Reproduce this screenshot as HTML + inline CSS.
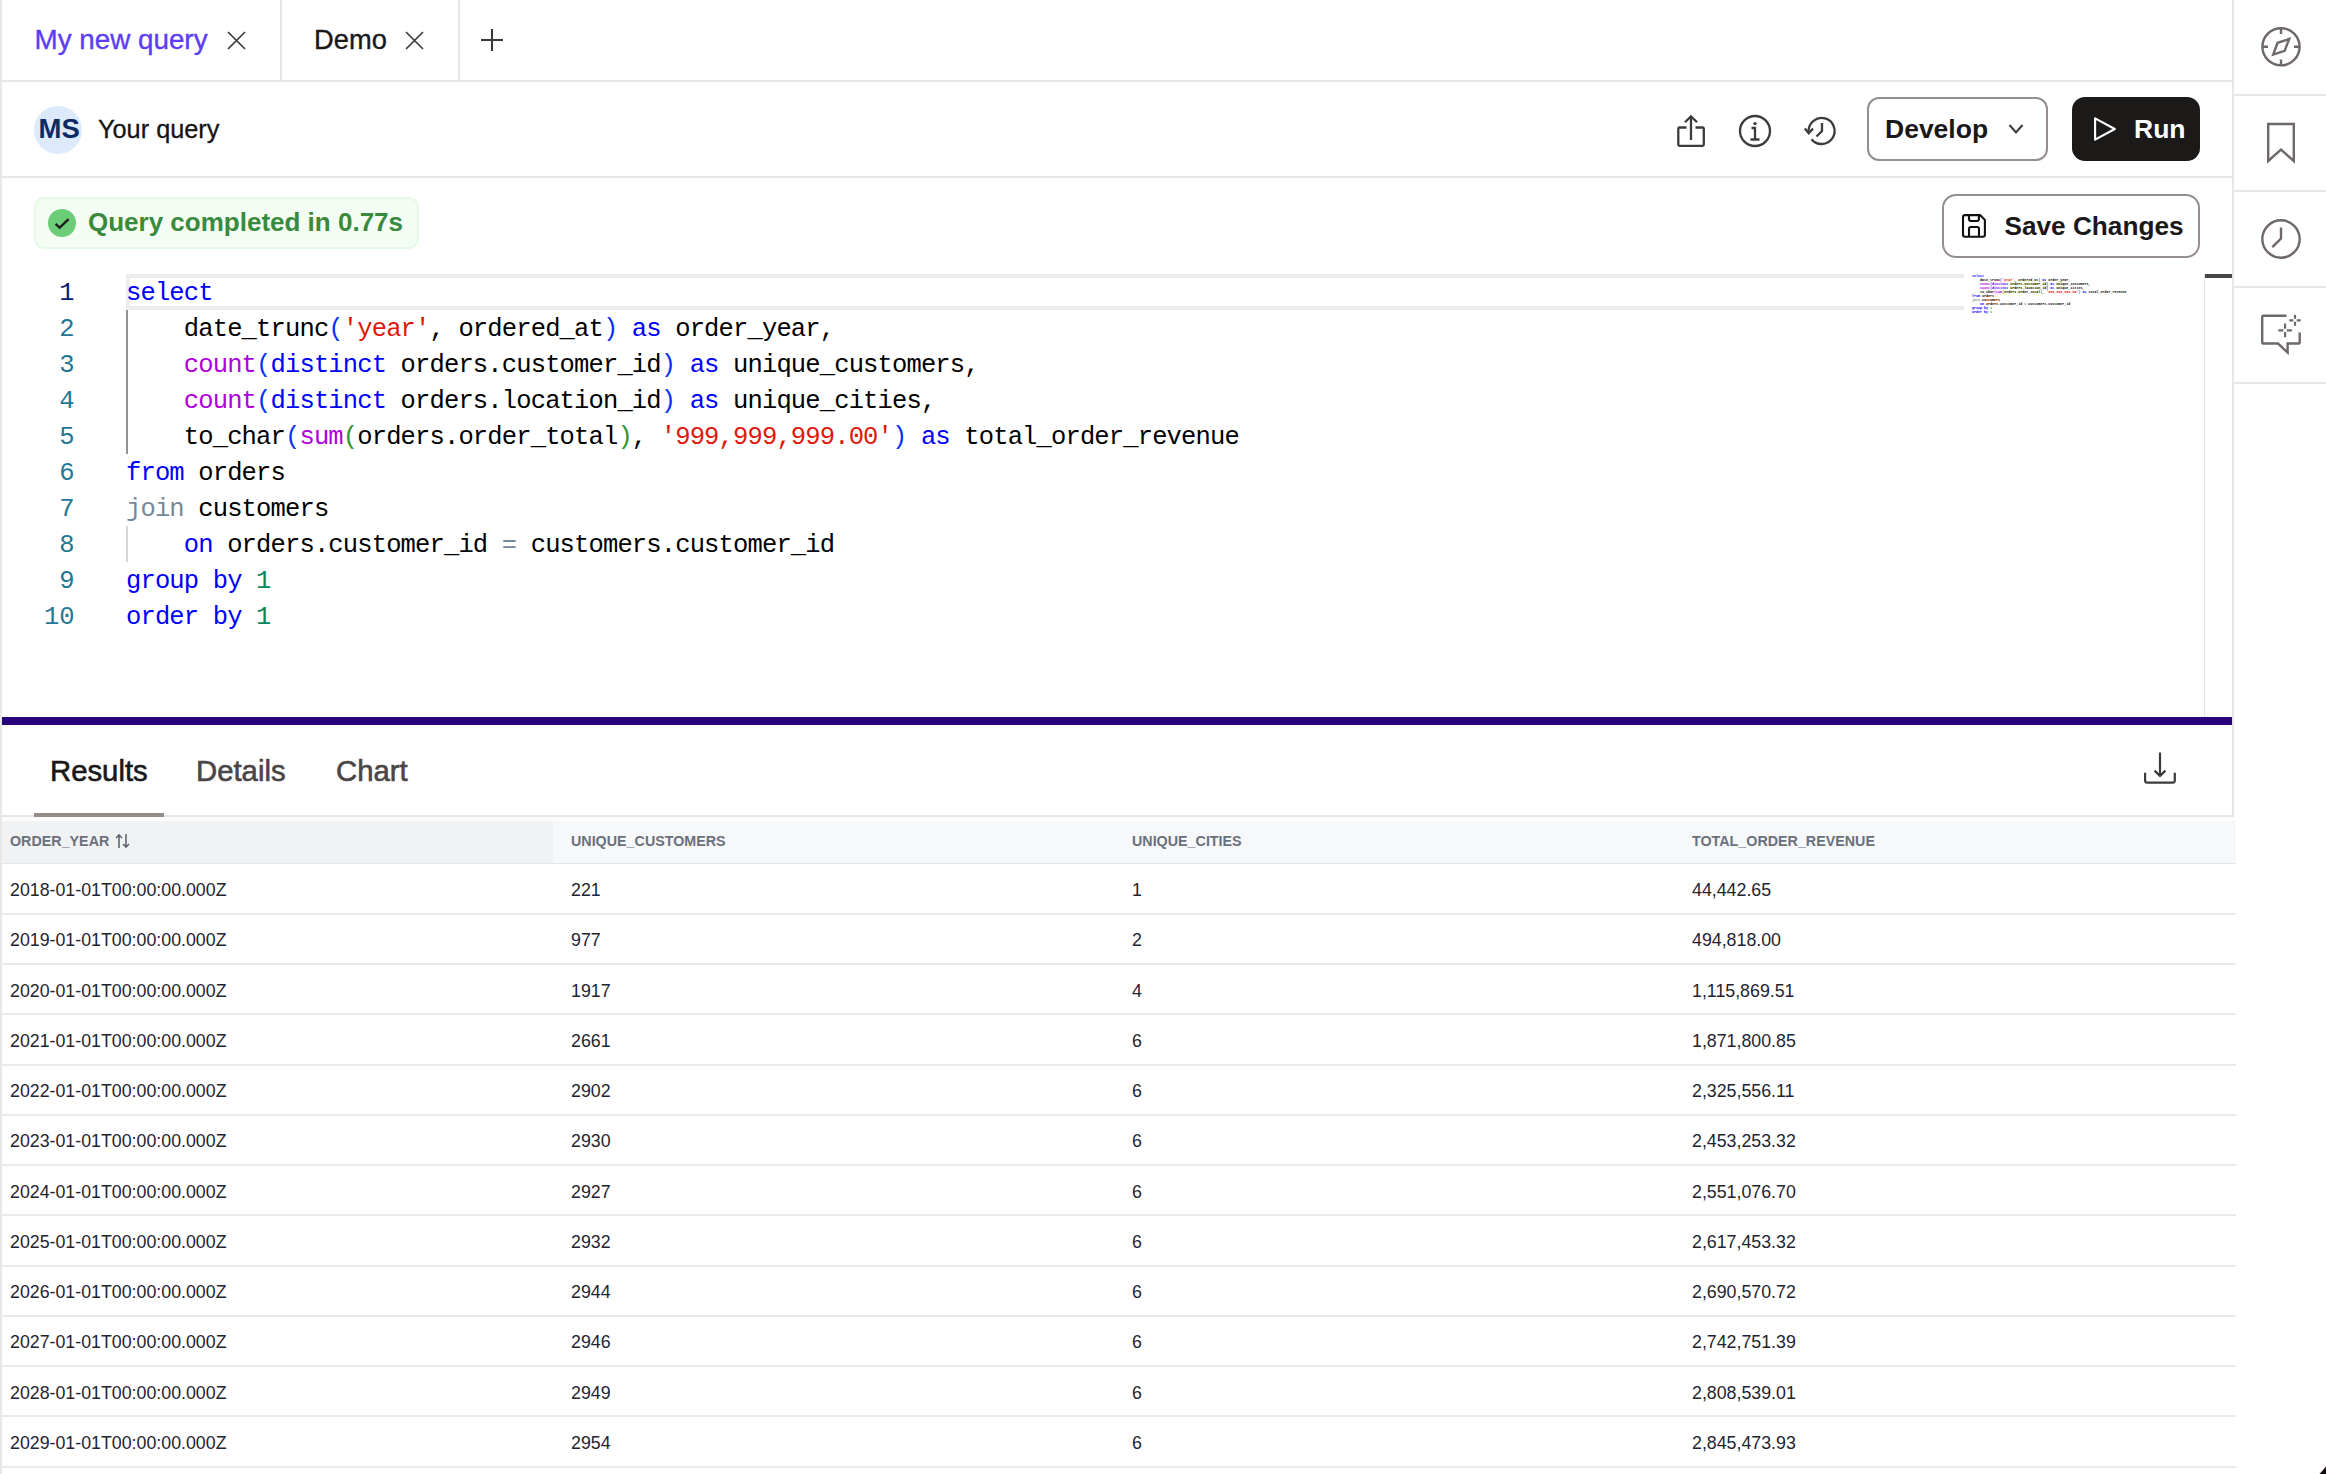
<!DOCTYPE html>
<html><head><meta charset="utf-8">
<style>
*{margin:0;padding:0;box-sizing:border-box}
html,body{width:2326px;height:1474px;overflow:hidden;background:#fff;font-family:"Liberation Sans",sans-serif;color:#1a1818}
.a{position:absolute}
.ln{position:absolute;background:#e8e6e6}
.t{position:absolute;white-space:pre;line-height:1}
.code{font-family:"Liberation Mono",monospace;font-size:25.5px;letter-spacing:-0.85px;color:#000}
.kw{color:#0000ff}.fn{color:#af00db}.st{color:#e0180c}.nu{color:#098658}.op{color:#778899}.b1{color:#0431fa}.b2{color:#319331}
.gut{font-family:"Liberation Mono",monospace;font-size:25.5px;color:#237893;text-align:right}
.cell{font-size:17.8px;color:#1f2430}
.hd{font-size:14.3px;font-weight:bold;color:#6a707c}
svg{position:absolute;overflow:visible}
</style></head><body>
<!-- left border -->
<div class="ln" style="left:0;top:0;width:2px;height:1474px;background:#e9e7e7"></div>

<!-- ===== TAB BAR ===== -->
<div class="ln" style="left:2;top:80px;left:2px;width:2232px;height:2px"></div>
<div class="ln" style="left:280px;top:0;width:2px;height:80px"></div>
<div class="ln" style="left:458px;top:0;width:2px;height:80px"></div>
<div class="t" style="left:34.5px;top:26px;font-size:27.8px;-webkit-text-stroke:0.35px currentColor;color:#5b3cf4">My new query</div>
<svg style="left:226.5px;top:30.5px" width="19" height="19" viewBox="0 0 19 19"><path d="M1 1L18 18M18 1L1 18" stroke="#3d3a3a" stroke-width="1.7"/></svg>
<div class="t" style="left:314px;top:26px;font-size:27.3px;-webkit-text-stroke:0.35px currentColor;color:#1a1818">Demo</div>
<svg style="left:404.5px;top:30.5px" width="19" height="19" viewBox="0 0 19 19"><path d="M1 1L18 18M18 1L1 18" stroke="#3d3a3a" stroke-width="1.7"/></svg>
<svg style="left:480px;top:28px" width="24" height="24" viewBox="0 0 24 24"><path d="M12 1V23M1 12H23" stroke="#3d3a3a" stroke-width="2.1"/></svg>

<!-- ===== HEADER ===== -->
<div class="ln" style="left:2px;top:176px;width:2232px;height:2px"></div>
<div class="a" style="left:34px;top:106px;width:48px;height:48px;border-radius:50%;background:#dceafc"></div>
<div class="t" style="left:38.5px;top:115px;font-size:27.5px;font-weight:bold;color:#0d2a63">MS</div>
<div class="t" style="left:98px;top:116.5px;font-size:25.3px;-webkit-text-stroke:0.3px currentColor;color:#161414">Your query</div>

<!-- ===== RIGHT SIDEBAR ===== -->
<div class="ln" style="left:2232px;top:0;width:2px;height:820px"></div>
<div class="ln" style="left:2234px;top:94px;width:92px;height:2px"></div>
<div class="ln" style="left:2234px;top:190px;width:92px;height:2px"></div>
<div class="ln" style="left:2234px;top:286px;width:92px;height:2px"></div>
<div class="ln" style="left:2234px;top:382px;width:92px;height:2px"></div>


<!-- header icons -->
<svg style="left:0;top:0" width="2326" height="1474" viewBox="0 0 2326 1474">
 <g fill="none" stroke="#3d3a3a" stroke-width="2.3" stroke-linecap="butt" stroke-linejoin="miter">
  <!-- share -->
  <path d="M1686.5 127.5H1679.5Q1678.3 127.5 1678.3 128.7V144.6Q1678.3 145.8 1679.5 145.8H1702.6Q1703.8 145.8 1703.8 144.6V128.7Q1703.8 127.5 1702.6 127.5H1695.5"/>
  <path d="M1691 140V116.5M1685 122.3L1691 116.3L1697 122.3"/>
  <!-- info -->
  <circle cx="1755" cy="131" r="15"/>
  <path d="M1751.5 128H1755V139.5M1750.5 139.5H1759.5"/>
  <!-- history -->
  <path d="M1808.6 131.5A13 13 0 1 1 1811.5 139.2"/>
  <path d="M1804.8 128.6L1808.7 133.2L1813 128.6"/>
  <path d="M1822 123V131L1816.5 136.5"/>
  <!-- develop chevron -->
  <path d="M2009.5 125L2016 132.5L2022.5 125" stroke-width="2"/>
 </g>
 <circle cx="1755" cy="123.6" r="1.7" fill="#3d3a3a"/>
</svg>
<!-- develop button -->
<div class="a" style="left:1867px;top:97px;width:181px;height:64px;border:2px solid #948e8d;border-radius:12px"></div>
<div class="t" style="left:1885px;top:115.5px;font-size:26.5px;font-weight:bold;color:#1a1818">Develop</div>
<!-- run button -->
<div class="a" style="left:2072px;top:97px;width:128px;height:64px;background:#1c1a19;border-radius:13px"></div>
<svg style="left:0;top:0" width="2326" height="1474"><path d="M2095.1 118.3L2114.8 129L2095.1 139.7Z" fill="none" stroke="#fff" stroke-width="2.1" stroke-linejoin="round"/></svg>
<div class="t" style="left:2134px;top:115.5px;font-size:26.5px;font-weight:bold;color:#fff">Run</div>
<!-- save changes -->
<div class="a" style="left:1942px;top:194px;width:258px;height:64px;border:2px solid #948e8d;border-radius:14px"></div>
<svg style="left:0;top:0" width="2326" height="1474"><g fill="none" stroke="#111" stroke-width="2.1" stroke-linejoin="round">
 <path d="M1965 215.1H1980.1L1984.9 219.9V234.8Q1984.9 236.8 1982.9 236.8H1965Q1963 236.8 1963 234.8V217.1Q1963 215.1 1965 215.1Z"/>
 <path d="M1969 215.1V219Q1969 221 1971 221H1976.9Q1978.9 221 1978.9 219V215.1"/>
 <path d="M1969 236.8V229Q1969 227 1971 227H1977Q1979 227 1979 229V236.8"/>
</g></svg>
<div class="t" style="left:2004.5px;top:212.8px;font-size:26.2px;font-weight:bold;color:#1a1818">Save Changes</div>
<!-- sidebar icons -->
<svg style="left:0;top:0" width="2326" height="1474"><g fill="none" stroke="#6e6868" stroke-width="2.4">
 <circle cx="2281" cy="46.8" r="18.6"/>
 <path d="M2281 28.5V34M2281 59.5V65M2262.5 46.8H2268M2294 46.8H2299.5"/>
 <path d="M2289.2 39L2284.6 50.9L2273.2 54.6L2277.6 42.8Z"/>
 <path d="M2268.2 124H2293.8V161L2281 149.6L2268.2 161Z"/>
 <circle cx="2281" cy="239" r="18.7"/>
 <path d="M2281 227.5V238.5L2272.3 247.2"/>
 <path d="M2286.5 315.8H2263.3Q2262.2 315.8 2262.2 316.9V342.4Q2262.2 343.5 2263.3 343.5H2278L2287.6 352.4V343.5H2298.6Q2299.7 343.5 2299.7 342.4V332.5"/>
 <path d="M2285.1 323.5V328.7M2285.1 332V337.2M2278.3 330.3H2283.4M2286.8 330.3H2291.9M2295 314.8V318.8M2295 321.8V325.8M2289.3 320.3H2293.3M2296.7 320.3H2300.7" stroke-width="2.2"/>
</g></svg>
<!-- download icon -->
<svg style="left:0;top:0" width="2326" height="1474"><g fill="none" stroke="#3d3a3a" stroke-width="2.2">
 <path d="M2160 752.5V776.5M2154.6 770.6L2160 776L2165.4 770.6"/>
 <path d="M2145.1 772.8V780.6Q2145.1 782.6 2147.1 782.6H2172.8Q2174.8 782.6 2174.8 780.6V772.8"/>
</g></svg>
<!-- bottom-right dark corner -->
<svg style="left:0;top:0" width="2326" height="1474"><path d="M2319.5 1474Q2323 1470 2326 1466.4V1474Z" fill="#120c0c"/></svg>

<!-- ===== STATUS ===== -->
<div class="a" style="left:34px;top:197px;width:385px;height:52px;border:2px solid #e5fae5;background:#f3fdf3;border-radius:10px"></div>
<div class="a" style="left:48px;top:209px;width:28px;height:28px;border-radius:50%;background:#6ccc78"></div>
<svg style="left:48px;top:209px" width="28" height="28" viewBox="0 0 28 28"><path d="M7.6 14.8L11.7 18.6L20.6 10.1" stroke="#1f1d1d" stroke-width="2.3" fill="none"/></svg>
<div class="t" style="left:88px;top:209px;font-size:26px;font-weight:bold;color:#3a8a3d">Query completed in 0.77s</div>

<!-- ===== EDITOR ===== -->
<div id="editor"><div class="a" style="left:126px;top:274px;width:1838px;height:36px;border:4px solid #ededed;border-right:none"></div>
<div class="a" style="left:126px;top:310px;width:2px;height:144px;background:#939393"></div>
<div class="a" style="left:126px;top:526px;width:2px;height:36px;background:#d6d6d6"></div>
<div class="a" style="left:2204px;top:274px;width:1px;height:443px;background:#e4e4e4"></div>
<div class="a" style="left:2205px;top:274px;width:27px;height:4px;background:#474747"></div>
<div class="t code" style="left:126px;top:275.50px;height:36px;line-height:36px"><span class="kw">select</span></div>
<div class="t gut" style="left:0px;width:74.5px;top:275.50px;line-height:36px;color:#0b216f">1</div>
<div class="t code" style="left:126px;top:311.50px;height:36px;line-height:36px">    date_trunc<span class="b1">(</span><span class="st">&#x27;year&#x27;</span>, ordered_at<span class="b1">)</span> <span class="kw">as</span> order_year,</div>
<div class="t gut" style="left:0px;width:74.5px;top:311.50px;line-height:36px;color:#237893">2</div>
<div class="t code" style="left:126px;top:347.50px;height:36px;line-height:36px">    <span class="fn">count</span><span class="b1">(</span><span class="kw">distinct</span> orders.customer_id<span class="b1">)</span> <span class="kw">as</span> unique_customers,</div>
<div class="t gut" style="left:0px;width:74.5px;top:347.50px;line-height:36px;color:#237893">3</div>
<div class="t code" style="left:126px;top:383.50px;height:36px;line-height:36px">    <span class="fn">count</span><span class="b1">(</span><span class="kw">distinct</span> orders.location_id<span class="b1">)</span> <span class="kw">as</span> unique_cities,</div>
<div class="t gut" style="left:0px;width:74.5px;top:383.50px;line-height:36px;color:#237893">4</div>
<div class="t code" style="left:126px;top:419.50px;height:36px;line-height:36px">    to_char<span class="b1">(</span><span class="fn">sum</span><span class="b2">(</span>orders.order_total<span class="b2">)</span>, <span class="st">&#x27;999,999,999.00&#x27;</span><span class="b1">)</span> <span class="kw">as</span> total_order_revenue</div>
<div class="t gut" style="left:0px;width:74.5px;top:419.50px;line-height:36px;color:#237893">5</div>
<div class="t code" style="left:126px;top:455.50px;height:36px;line-height:36px"><span class="kw">from</span> orders</div>
<div class="t gut" style="left:0px;width:74.5px;top:455.50px;line-height:36px;color:#237893">6</div>
<div class="t code" style="left:126px;top:491.50px;height:36px;line-height:36px"><span class="op">join</span> customers</div>
<div class="t gut" style="left:0px;width:74.5px;top:491.50px;line-height:36px;color:#237893">7</div>
<div class="t code" style="left:126px;top:527.50px;height:36px;line-height:36px">    <span class="kw">on</span> orders.customer_id <span class="op">=</span> customers.customer_id</div>
<div class="t gut" style="left:0px;width:74.5px;top:527.50px;line-height:36px;color:#237893">8</div>
<div class="t code" style="left:126px;top:563.50px;height:36px;line-height:36px"><span class="kw">group</span> <span class="kw">by</span> <span class="nu">1</span></div>
<div class="t gut" style="left:0px;width:74.5px;top:563.50px;line-height:36px;color:#237893">9</div>
<div class="t code" style="left:126px;top:599.50px;height:36px;line-height:36px"><span class="kw">order</span> <span class="kw">by</span> <span class="nu">1</span></div>
<div class="t gut" style="left:0px;width:74.5px;top:599.50px;line-height:36px;color:#237893">10</div>
<div class="a" style="left:1964px;top:274px;width:240px;height:443px;overflow:hidden">
<div class="t code" style="left:8px;top:-0.5px;font-size:3.35px;line-height:4px;letter-spacing:0;font-weight:bold"><span class="kw">select</span></div>
<div class="t code" style="left:8px;top:3.5px;font-size:3.35px;line-height:4px;letter-spacing:0;font-weight:bold">    date_trunc<span class="b1">(</span><span class="st">&#x27;year&#x27;</span>, ordered_at<span class="b1">)</span> <span class="kw">as</span> order_year,</div>
<div class="t code" style="left:8px;top:7.5px;font-size:3.35px;line-height:4px;letter-spacing:0;font-weight:bold">    <span class="fn">count</span><span class="b1">(</span><span class="kw">distinct</span> orders.customer_id<span class="b1">)</span> <span class="kw">as</span> unique_customers,</div>
<div class="t code" style="left:8px;top:11.5px;font-size:3.35px;line-height:4px;letter-spacing:0;font-weight:bold">    <span class="fn">count</span><span class="b1">(</span><span class="kw">distinct</span> orders.location_id<span class="b1">)</span> <span class="kw">as</span> unique_cities,</div>
<div class="t code" style="left:8px;top:15.5px;font-size:3.35px;line-height:4px;letter-spacing:0;font-weight:bold">    to_char<span class="b1">(</span><span class="fn">sum</span><span class="b2">(</span>orders.order_total<span class="b2">)</span>, <span class="st">&#x27;999,999,999.00&#x27;</span><span class="b1">)</span> <span class="kw">as</span> total_order_revenue</div>
<div class="t code" style="left:8px;top:19.5px;font-size:3.35px;line-height:4px;letter-spacing:0;font-weight:bold"><span class="kw">from</span> orders</div>
<div class="t code" style="left:8px;top:23.5px;font-size:3.35px;line-height:4px;letter-spacing:0;font-weight:bold"><span class="op">join</span> customers</div>
<div class="t code" style="left:8px;top:27.5px;font-size:3.35px;line-height:4px;letter-spacing:0;font-weight:bold">    <span class="kw">on</span> orders.customer_id <span class="op">=</span> customers.customer_id</div>
<div class="t code" style="left:8px;top:31.5px;font-size:3.35px;line-height:4px;letter-spacing:0;font-weight:bold"><span class="kw">group</span> <span class="kw">by</span> <span class="nu">1</span></div>
<div class="t code" style="left:8px;top:35.5px;font-size:3.35px;line-height:4px;letter-spacing:0;font-weight:bold"><span class="kw">order</span> <span class="kw">by</span> <span class="nu">1</span></div>
</div></div><!--/editor-->

<!-- ===== DIVIDER ===== -->
<div class="a" style="left:2px;top:717px;width:2230px;height:8px;background:#27047c"></div>

<!-- ===== RESULTS TABS ===== -->
<div class="t" style="left:50px;top:755.5px;font-size:29.3px;-webkit-text-stroke:0.6px currentColor;color:#1a1818">Results</div>
<div class="t" style="left:196px;top:755.5px;font-size:29.3px;-webkit-text-stroke:0.6px currentColor;color:#4a4646">Details</div>
<div class="t" style="left:336px;top:755.5px;font-size:29.3px;-webkit-text-stroke:0.6px currentColor;color:#4a4646">Chart</div>
<div class="ln" style="left:2px;top:815px;width:2232px;height:2px"></div>
<div class="a" style="left:34px;top:813px;width:130px;height:4px;background:#948c89"></div>

<!-- ===== TABLE ===== -->
<div id="table"><div class="a" style="left:2px;top:817px;width:2234px;height:4px;background:#fcfcfc"></div>
<div class="a" style="left:2px;top:821px;width:551px;height:42px;background:#f1f2f4"></div>
<div class="a" style="left:553px;top:821px;width:1683px;height:42px;background:#f7f8fa"></div>
<div class="a" style="left:2px;top:863px;width:2234px;height:1px;background:#e4e6ea"></div>
<div class="t hd" style="left:10px;top:834px">ORDER_YEAR</div>
<div class="t hd" style="left:571px;top:834px">UNIQUE_CUSTOMERS</div>
<div class="t hd" style="left:1132px;top:834px">UNIQUE_CITIES</div>
<div class="t hd" style="left:1692px;top:834px">TOTAL_ORDER_REVENUE</div>
<svg style="left:115px;top:833px" width="16" height="16" viewBox="0 0 16 16"><path d="M4 15V2M1 5L4 2L7 5M11 1V14M8 11L11 14L14 11" stroke="#5f6672" stroke-width="1.6" fill="none"/></svg>
<div class="t cell" style="left:10px;top:882.00px">2018-01-01T00:00:00.000Z</div>
<div class="t cell" style="left:571px;top:882.00px">221</div>
<div class="t cell" style="left:1132px;top:882.00px">1</div>
<div class="t cell" style="left:1692px;top:882.00px">44,442.65</div>
<div class="a" style="left:2px;top:912.75px;width:2234px;height:2px;background:#e9eaee"></div>
<div class="t cell" style="left:10px;top:932.25px">2019-01-01T00:00:00.000Z</div>
<div class="t cell" style="left:571px;top:932.25px">977</div>
<div class="t cell" style="left:1132px;top:932.25px">2</div>
<div class="t cell" style="left:1692px;top:932.25px">494,818.00</div>
<div class="a" style="left:2px;top:963.00px;width:2234px;height:2px;background:#e9eaee"></div>
<div class="t cell" style="left:10px;top:982.50px">2020-01-01T00:00:00.000Z</div>
<div class="t cell" style="left:571px;top:982.50px">1917</div>
<div class="t cell" style="left:1132px;top:982.50px">4</div>
<div class="t cell" style="left:1692px;top:982.50px">1,115,869.51</div>
<div class="a" style="left:2px;top:1013.25px;width:2234px;height:2px;background:#e9eaee"></div>
<div class="t cell" style="left:10px;top:1032.75px">2021-01-01T00:00:00.000Z</div>
<div class="t cell" style="left:571px;top:1032.75px">2661</div>
<div class="t cell" style="left:1132px;top:1032.75px">6</div>
<div class="t cell" style="left:1692px;top:1032.75px">1,871,800.85</div>
<div class="a" style="left:2px;top:1063.50px;width:2234px;height:2px;background:#e9eaee"></div>
<div class="t cell" style="left:10px;top:1083.00px">2022-01-01T00:00:00.000Z</div>
<div class="t cell" style="left:571px;top:1083.00px">2902</div>
<div class="t cell" style="left:1132px;top:1083.00px">6</div>
<div class="t cell" style="left:1692px;top:1083.00px">2,325,556.11</div>
<div class="a" style="left:2px;top:1113.75px;width:2234px;height:2px;background:#e9eaee"></div>
<div class="t cell" style="left:10px;top:1133.25px">2023-01-01T00:00:00.000Z</div>
<div class="t cell" style="left:571px;top:1133.25px">2930</div>
<div class="t cell" style="left:1132px;top:1133.25px">6</div>
<div class="t cell" style="left:1692px;top:1133.25px">2,453,253.32</div>
<div class="a" style="left:2px;top:1164.00px;width:2234px;height:2px;background:#e9eaee"></div>
<div class="t cell" style="left:10px;top:1183.50px">2024-01-01T00:00:00.000Z</div>
<div class="t cell" style="left:571px;top:1183.50px">2927</div>
<div class="t cell" style="left:1132px;top:1183.50px">6</div>
<div class="t cell" style="left:1692px;top:1183.50px">2,551,076.70</div>
<div class="a" style="left:2px;top:1214.25px;width:2234px;height:2px;background:#e9eaee"></div>
<div class="t cell" style="left:10px;top:1233.75px">2025-01-01T00:00:00.000Z</div>
<div class="t cell" style="left:571px;top:1233.75px">2932</div>
<div class="t cell" style="left:1132px;top:1233.75px">6</div>
<div class="t cell" style="left:1692px;top:1233.75px">2,617,453.32</div>
<div class="a" style="left:2px;top:1264.50px;width:2234px;height:2px;background:#e9eaee"></div>
<div class="t cell" style="left:10px;top:1284.00px">2026-01-01T00:00:00.000Z</div>
<div class="t cell" style="left:571px;top:1284.00px">2944</div>
<div class="t cell" style="left:1132px;top:1284.00px">6</div>
<div class="t cell" style="left:1692px;top:1284.00px">2,690,570.72</div>
<div class="a" style="left:2px;top:1314.75px;width:2234px;height:2px;background:#e9eaee"></div>
<div class="t cell" style="left:10px;top:1334.25px">2027-01-01T00:00:00.000Z</div>
<div class="t cell" style="left:571px;top:1334.25px">2946</div>
<div class="t cell" style="left:1132px;top:1334.25px">6</div>
<div class="t cell" style="left:1692px;top:1334.25px">2,742,751.39</div>
<div class="a" style="left:2px;top:1365.00px;width:2234px;height:2px;background:#e9eaee"></div>
<div class="t cell" style="left:10px;top:1384.50px">2028-01-01T00:00:00.000Z</div>
<div class="t cell" style="left:571px;top:1384.50px">2949</div>
<div class="t cell" style="left:1132px;top:1384.50px">6</div>
<div class="t cell" style="left:1692px;top:1384.50px">2,808,539.01</div>
<div class="a" style="left:2px;top:1415.25px;width:2234px;height:2px;background:#e9eaee"></div>
<div class="t cell" style="left:10px;top:1434.75px">2029-01-01T00:00:00.000Z</div>
<div class="t cell" style="left:571px;top:1434.75px">2954</div>
<div class="t cell" style="left:1132px;top:1434.75px">6</div>
<div class="t cell" style="left:1692px;top:1434.75px">2,845,473.93</div>
<div class="a" style="left:2px;top:1465.50px;width:2234px;height:2px;background:#e9eaee"></div></div><!--/table-->
</body></html>
